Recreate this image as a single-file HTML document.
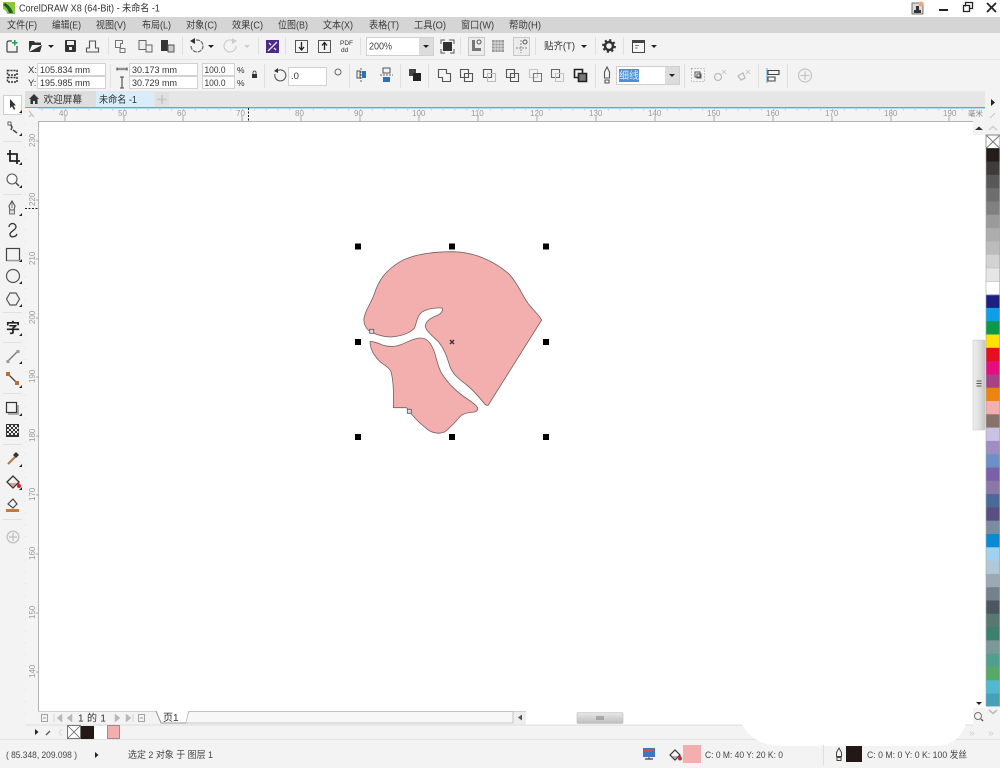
<!DOCTYPE html>
<html><head><meta charset="utf-8"><title>CorelDRAW X8</title>
<style>
html,body{margin:0;padding:0;background:#fff;overflow:hidden;width:1000px;height:768px}
svg{display:block;position:absolute;left:0;top:0}
text{font-family:"Liberation Sans","Noto Sans CJK SC",sans-serif;font-size:10px;fill:#333}
.m text{font-size:10px;fill:#3a3a3a}
.r text{font-size:8px;fill:#9a9a9a}
.p text{font-size:9.5px;fill:#333}
.ui{filter:blur(.35px)}
</style></head><body>
<svg width="1000" height="768" viewBox="0 0 1000 768" xmlns="http://www.w3.org/2000/svg">
<defs>
<pattern id="hx" x="6" y="0" width="11.8" height="14" patternUnits="userSpaceOnUse"><rect x="0" y="11" width="1" height="1.500" fill="#c4c4c4"/></pattern>
<pattern id="vx" x="0" y="5" width="14" height="11.8" patternUnits="userSpaceOnUse"><rect x="10" y="0" width="1.500" height="1" fill="#c4c4c4"/></pattern>
<linearGradient id="sb" x1="0" x2="1" y1="0" y2="0"><stop offset="0" stop-color="#efefef"/><stop offset=".6" stop-color="#dcdcdc"/><stop offset="1" stop-color="#c4c4c4"/></linearGradient>
<linearGradient id="sh" x1="0" x2="0" y1="0" y2="1"><stop offset="0" stop-color="#e8e8e8"/><stop offset="1" stop-color="#bdbdbd"/></linearGradient>
</defs>
<!-- backgrounds -->
<rect width="1000" height="768" fill="#fff"/>
<rect y="17" width="1000" height="16" fill="#d5d5d5"/>
<rect y="33" width="1000" height="26" fill="#f3f3f3"/>
<rect y="59" width="1000" height="1" fill="#e4e4e4"/>
<rect y="60" width="1000" height="31" fill="#f3f3f3"/>
<rect y="91" width="1000" height="16" fill="#e6e6e6"/>
<rect x="0" y="91" width="25" height="649" fill="#f3f3f3"/>
<rect x="25" y="108.400" width="960" height="13" fill="#f4f4f4"/>
<rect x="25" y="108.400" width="960" height="13" fill="url(#hx)"/>
<rect x="25" y="107" width="960" height="1.400" fill="#43b4e2"/>
<rect x="25" y="121" width="948" height="1" fill="#b4b4b4"/>
<rect x="25" y="108" width="13" height="617" fill="#f4f4f4"/>
<rect x="25" y="108" width="13" height="617" fill="url(#vx)"/>
<rect x="38" y="121" width="1" height="590" fill="#b4b4b4"/>
<rect x="985" y="91" width="15" height="44" fill="#f3f3f3"/>
<rect x="973" y="121" width="13" height="14" fill="#f3f3f3"/>
<rect x="986" y="706" width="14" height="34" fill="#f3f3f3"/>
<!-- lower bars -->
<rect x="38" y="711" width="488" height="14" fill="#f3f3f3"/>
<rect x="38" y="711" width="488" height="1" fill="#cfcfcf"/>
<rect x="973" y="708" width="13" height="17" fill="#f3f3f3"/>
<rect x="0" y="725" width="1000" height="15" fill="#f3f3f3"/>
<rect x="25" y="724.500" width="948" height="1" fill="#dcdcdc"/>
<rect x="0" y="740" width="1000" height="28" fill="#f3f3f3"/>
<rect x="0" y="739" width="1000" height="1" fill="#e2e2e2"/>
<path d="M742 724 Q752 745 782 746 L938 746 Q958 745 966 724Z" fill="#fff"/>

<!-- shape -->
<svg x="345" y="235" width="215" height="210" viewBox="0 0 645 630">
<g fill="#f3aeae" stroke="#75605f" stroke-width="2.4" stroke-linejoin="round">
<path d="M57 250C60 225 80 205 92 165C105 130 125 105 165 80C205 58 260 50 325 50C395 52 450 82 490 115C520 145 535 190 553 210C565 225 582 240 590 255L430 510Q425 513 420 508C405 490 385 465 365 450C340 430 325 420 315 395C305 365 300 345 280 320C265 305 245 290 241 275C240 258 262 246 280 240C290 234 295 225 292 219C270 217 245 222 230 232C215 245 215 265 208 280C190 298 160 305 135 306C115 305 95 300 75 290C62 280 55 265 57 250Z"/>
<path d="M75 320C85 318 100 325 112 330C130 336 150 336 170 328C190 320 205 310 225 309C245 308 258 325 266 345C275 370 278 395 290 415C305 440 330 465 350 480C370 495 390 505 398 518Q399 528 390 531C375 532 360 534 350 540C335 555 320 575 300 590C285 598 265 595 250 585C230 570 210 550 195 532C190 525 188 519 183 518L145 518C146 490 146 440 138 410C130 393 115 390 105 380C90 365 75 345 75 320Z"/>
</g></svg>
<!-- handles -->
<g fill="#000">
<rect x="355" y="243.500" width="6" height="6"/><rect x="449" y="243.500" width="6" height="6"/><rect x="543" y="243.500" width="6" height="6"/>
<rect x="355" y="339" width="6" height="6"/><rect x="543" y="339" width="6" height="6"/>
<rect x="355" y="434" width="6" height="6"/><rect x="449" y="434" width="6" height="6"/><rect x="543" y="434" width="6" height="6"/>
</g>
<rect x="369.700" y="329.300" width="4" height="4" fill="#ddd" stroke="#555" stroke-width=".8"/>
<rect x="407.300" y="409.300" width="4" height="4" fill="#ddd" stroke="#555" stroke-width=".8"/>
<path d="M450 340l4 4M454 340l-4 4" stroke="#334" stroke-width="1.400"/>

<g class="ui">
<!-- title -->
<rect x="3" y="2" width="12" height="12" fill="#8cc63f"/>
<path d="M5 3C9 5 12 9 13 13L9 13C8 9 6 7 3 5Z" fill="#1e5b2c"/>
<path d="M3 9C5 10 7 12 7 14L3 14Z" fill="#fff"/>
<text x="19" y="11.500" style="font-size:10px" textLength="141" lengthAdjust="spacingAndGlyphs">CorelDRAW X8 (64-Bit) - 未命名 -1</text>
<rect x="912" y="3" width="11" height="11" fill="#dcdcdc" stroke="#555" stroke-width=".8"/>
<path d="M914 13v-3h7v3zM916 6h3v4h-3z" fill="#333"/>
<circle cx="921" cy="4" r="2.500" fill="#f2a878"/>
<rect x="939" y="9" width="9" height="2" fill="#222"/>
<path d="M965.500 6.500V2.500h7v6h-3M963.500 5.500h6v6h-6z" fill="none" stroke="#222" stroke-width="1.300"/>
<path d="M987 3l9 9M996 3l-9 9" stroke="#222" stroke-width="1.800"/>

<!-- menu -->
<g class="m">
<text x="7" y="28.500" textLength="30" lengthAdjust="spacingAndGlyphs">文件(F)</text><text x="52" y="28.500" textLength="29" lengthAdjust="spacingAndGlyphs">编辑(E)</text><text x="96" y="28.500" textLength="30" lengthAdjust="spacingAndGlyphs">视图(V)</text><text x="142" y="28.500" textLength="29" lengthAdjust="spacingAndGlyphs">布局(L)</text><text x="186" y="28.500" textLength="31" lengthAdjust="spacingAndGlyphs">对象(C)</text><text x="232" y="28.500" textLength="31" lengthAdjust="spacingAndGlyphs">效果(C)</text><text x="278" y="28.500" textLength="30" lengthAdjust="spacingAndGlyphs">位图(B)</text><text x="323" y="28.500" textLength="30" lengthAdjust="spacingAndGlyphs">文本(X)</text><text x="369" y="28.500" textLength="30" lengthAdjust="spacingAndGlyphs">表格(T)</text><text x="414" y="28.500" textLength="32" lengthAdjust="spacingAndGlyphs">工具(O)</text><text x="461" y="28.500" textLength="33" lengthAdjust="spacingAndGlyphs">窗口(W)</text><text x="509" y="28.500" textLength="32" lengthAdjust="spacingAndGlyphs">帮助(H)</text>
</g>

<!-- separators toolbar 1 -->
<g fill="#dfdfdf">
<rect x="108" y="37" width="1" height="18"/><rect x="182" y="37" width="1" height="18"/><rect x="258" y="37" width="1" height="18"/><rect x="285" y="37" width="1" height="18"/><rect x="360" y="37" width="1" height="18"/><rect x="460" y="37" width="1" height="18"/><rect x="535" y="37" width="1" height="18"/><rect x="595" y="37" width="1" height="18"/><rect x="623" y="37" width="1" height="18"/>
<rect x="110" y="64" width="1" height="24"/><rect x="264" y="64" width="1" height="24"/><rect x="349" y="64" width="1" height="24"/><rect x="400" y="64" width="1" height="24"/><rect x="428" y="64" width="1" height="24"/><rect x="595" y="64" width="1" height="24"/><rect x="684" y="64" width="1" height="24"/><rect x="758" y="64" width="1" height="24"/><rect x="787" y="64" width="1" height="24"/>
</g>

<!-- toolbar 1 icons -->
<path d="M7 52V43Q7 41 9 41H12M7 52H17V46" fill="none" stroke="#444" stroke-width="1.200"/>
<path d="M14 40h1.500v2h2v1.500h-2v2h-1.500v-2h-2v-1.500h2z" fill="#16a34a"/>
<path d="M29 52V41h5l1 1.500h6V45H32l-3 7zM29 52h11l2-7" fill="#333"/>
<path d="M48 45h6l-3 3z" fill="#222"/>
<rect x="65" y="40" width="11" height="12" rx="1" fill="#333"/><rect x="67" y="41" width="7" height="4" fill="#eee"/><rect x="69" y="47" width="3" height="3" fill="#eee"/>
<path d="M86.500 52v-4h3v-7h6v7h3v4z" fill="none" stroke="#555" stroke-width="1.100"/>
<path d="M115.500 40.500h7v3h-2v4h-5zM120 48.500h5v4h-5z" fill="none" stroke="#777" stroke-width="1"/>
<path d="M139 40.500h7v9h-7zM146 45h6v7h-6z" fill="#eee" stroke="#666" stroke-width="1"/>
<rect x="161" y="40" width="7" height="11" fill="#333"/><rect x="168" y="45" width="6" height="7" fill="#ccc" stroke="#555" stroke-width="1"/>
<path d="M191 46a6 6 0 1 0 2-4.500" fill="none" stroke="#666" stroke-width="1.200" stroke-dasharray="4 1"/><path d="M195 38v6l-5-3z" fill="#333"/>
<path d="M208 45h6l-3 3z" fill="#222"/>
<path d="M236 46a6 6 0 1 1-2-4.500" fill="none" stroke="#ccc" stroke-width="1.200"/><path d="M232 38v6l5-3z" fill="#ccc"/>
<path d="M244 45h6l-3 3z" fill="#ccc"/>
<rect x="266" y="40" width="13" height="13" fill="#4b2a86"/><path d="M268 51l9-9M269 43l2 2M274 48l2 2" stroke="#e8e0f4" stroke-width="1.400"/>
<rect x="295.500" y="40.500" width="12" height="12" fill="none" stroke="#555"/><path d="M301.500 42v7M299 47l2.500 3 2.500-3" fill="none" stroke="#222" stroke-width="1.300"/>
<rect x="318.500" y="40.500" width="12" height="12" fill="none" stroke="#555"/><path d="M324.500 50v-7M322 45.500l2.500-3 2.500 3" fill="none" stroke="#222" stroke-width="1.300"/>
<text x="340" y="45" style="font-size:6.500px;fill:#333">PDF</text><text x="341" y="52" style="font-size:6.500px;fill:#333">dd</text>
<rect x="366.500" y="37.500" width="67" height="18" fill="#fff" stroke="#d0d0d0"/>
<rect x="419" y="38" width="14" height="17" fill="#dcdcdc"/>
<path d="M423 45h6l-3 3z" fill="#222"/>
<text x="369" y="49.500" style="font-size:10px;fill:#444" textLength="23" lengthAdjust="spacingAndGlyphs">200%</text>
<rect x="443" y="42" width="9" height="9" fill="#333"/><path d="M441 44v-4h4M449 40h5v4M454 49v4h-4M445 53h-4v-4" fill="none" stroke="#555"/>
<rect x="468.500" y="37.500" width="16" height="18" fill="#ececec" stroke="#c8c8c8"/><path d="M472 40v11h9v-3h-6v-8z" fill="#777"/><circle cx="479" cy="42" r="2" fill="none" stroke="#555"/>
<path d="M492 40h12v12h-12z" fill="#999"/><path d="M492 43h12M492 46h12M492 49h12M495 40v12M498 40v12M501 40v12" stroke="#eee" stroke-width=".7"/>
<rect x="513.500" y="37.500" width="16" height="18" fill="#ececec" stroke="#c8c8c8"/><path d="M521 40v13M516 48h11" stroke="#888" stroke-dasharray="2 1"/><circle cx="525" cy="42" r="2" fill="none" stroke="#555"/>
<text x="544" y="49.500" textLength="31" lengthAdjust="spacingAndGlyphs">贴齐(T)</text>
<path d="M581 45h6l-3 3z" fill="#222"/>
<g fill="none" stroke="#333"><circle cx="609" cy="46" r="4" stroke-width="2.500"/><circle cx="609" cy="46" r="6" stroke-width="1.800" stroke-dasharray="2.200 2.500"/></g>
<rect x="632.500" y="40.500" width="12" height="12" fill="#f7f7f7" stroke="#444"/><rect x="632.500" y="40.500" width="12" height="2.500" fill="#444"/><path d="M635 45h4v1h-4zM635 47.500h2.500v1H635z" fill="#777"/>
<path d="M651 45h6l-3 3z" fill="#222"/>

<!-- property bar -->
<g fill="none" stroke="#333" stroke-width="1.500" stroke-dasharray="2 1"><rect x="7.500" y="70.500" width="9.500" height="4.500"/><rect x="7.500" y="77.500" width="9.500" height="4.500"/></g>
<g fill="#fff" stroke="#d2d2d2">
<rect x="37.500" y="63.500" width="68" height="12"/><rect x="37.500" y="76.500" width="68" height="12"/>
<rect x="129.500" y="63.500" width="68" height="12"/><rect x="129.500" y="76.500" width="68" height="12"/>
<rect x="202.500" y="63.500" width="32" height="12"/><rect x="202.500" y="76.500" width="32" height="12"/>
<rect x="288.500" y="67.500" width="38" height="18"/>
</g>
<g class="p">
<text x="28" y="73">X:</text><text x="28" y="86">Y:</text>
<text x="40" y="73" textLength="50" lengthAdjust="spacingAndGlyphs">105.834 mm</text><text x="40" y="86" textLength="50" lengthAdjust="spacingAndGlyphs">195.985 mm</text>
<text x="132" y="73" textLength="45" lengthAdjust="spacingAndGlyphs">30.173 mm</text><text x="132" y="86" textLength="45" lengthAdjust="spacingAndGlyphs">30.729 mm</text>
<text x="204.500" y="73" textLength="21" lengthAdjust="spacingAndGlyphs">100.0</text><text x="204.500" y="86" textLength="21" lengthAdjust="spacingAndGlyphs">100.0</text>
<text x="237" y="73" style="font-size:8.500px">%</text><text x="237" y="86" style="font-size:8.500px">%</text>
<text x="291" y="79">.0</text>
</g>
<path d="M117 69h10M117 67.500v3M127 67.500v3" stroke="#444" stroke-width="1.100"/><path d="M119 67.500v3M121 67.500v3M123 67.500v3M125 67.500v3" stroke="#777" stroke-width=".6"/>
<path d="M122 77v11M120 77h4M120 88h4" stroke="#444" stroke-width="1.100"/>
<rect x="252" y="74" width="5" height="4" fill="#333"/><path d="M253 74v-1.500a1.500 1.500 0 0 1 3 0V74" fill="none" stroke="#333" stroke-width=".8"/>
<path d="M275 74a5.500 5.500 0 1 0 2-3" fill="none" stroke="#555" stroke-width="1.100"/><path d="M278 68v5l-4-2z" fill="#333"/>
<circle cx="338" cy="72" r="3" fill="none" stroke="#666"/>
<path d="M361 68v15" stroke="#666" stroke-dasharray="2 1"/><path d="M357 71h3v7h-3z" fill="none" stroke="#555"/><path d="M362 71h4v7h-4z" fill="#2a72b5"/>
<path d="M380 75h13" stroke="#666" stroke-dasharray="2 1"/><path d="M383 68h7v5h-7z" fill="none" stroke="#555"/><path d="M383 77h7v5h-7z" fill="#2a72b5"/>
<rect x="409" y="69" width="7" height="7" fill="#444"/><rect x="413" y="73" width="8" height="8" fill="#222"/>
<!-- boolean icons -->
<g fill="none" stroke="#555" stroke-width="1.100">
<path d="M438.500 69.500h8v4h4v8h-8v-4h-4z"/>
<path d="M460.500 69.500h8v8h-8zM464.500 73.500h8v8h-8z"/>
</g>
<g fill="none"><path d="M483.500 69.500h8v8h-8z" stroke="#555" stroke-width="1.100"/><path d="M487.500 73.500h8v8h-8z" stroke="#bbb" stroke-width="1.100"/>
<path d="M506.500 69.500h8v8h-8zM510.500 73.500h8v8h-8z" stroke="#555" stroke-width="1.100"/>
<path d="M529.500 69.500h8v8h-8z" stroke="#c4c4c4" stroke-width="1.100"/><path d="M533.500 73.500h8v8h-8z" stroke="#777" stroke-width="1.100"/>
<path d="M551.500 69.500h8v8h-8z" stroke="#666" stroke-width="1.100"/><path d="M555.500 73.500h8v8h-8z" stroke="#c4c4c4" stroke-width="1.100"/>
<path d="M574.500 69.500h8v8h-8z" stroke="#222" stroke-width="1.600"/><path d="M578.500 73.500h8v8h-8z" stroke="#222" stroke-width="1.600" fill="#777"/></g>
<path d="M607 67l2.500 5v6h-5v-6zM605 80h4v3h-4z" fill="none" stroke="#555" stroke-width="1.100"/>
<rect x="616.500" y="66.500" width="63" height="18" fill="#fff" stroke="#cfcfcf"/>
<rect x="665" y="67" width="14" height="17" fill="#dcdcdc"/>
<path d="M669 74h6l-3 3z" fill="#222"/>
<rect x="619" y="69" width="20" height="13" fill="#4a90d9"/>
<text x="619" y="79" style="font-size:10px;fill:#dcecff">细线</text>
<g fill="none" stroke="#999" stroke-dasharray="1 2"><rect x="691.500" y="68.500" width="13" height="13"/></g><path d="M695 72h5v5h-5zM697 74h4v4h-4z" fill="none" stroke="#555"/>
<circle cx="718" cy="77" r="3.500" fill="none" stroke="#bbb" stroke-width="1.300"/><path d="M722 70l4 4M726 70l-4 4" stroke="#ccc"/>
<path d="M738 76l5-3 2 5-4 2z" fill="none" stroke="#bbb" stroke-width="1.300"/><path d="M746 70l4 4M750 70l-4 4" stroke="#ccc"/>
<path d="M767 68v15" stroke="#56a8d8"/><path d="M768 70.500h11v4h-11zM768 77h7v4h-7z" fill="none" stroke="#444" stroke-width="1.100"/>
<circle cx="805" cy="75.500" r="6.500" fill="none" stroke="#c6c6c6" stroke-width="1.200"/><path d="M805 71v9M800.500 75.500h9" stroke="#c6c6c6" stroke-width="1.200"/>

<!-- tabs -->
<rect x="25" y="91" width="71" height="16" fill="#dedede"/>
<path d="M29 99l5-5 5 5h-1.500v5h-2.500v-3h-2v3h-2.500v-5z" fill="#333"/>
<text x="43.500" y="103" textLength="38.500" lengthAdjust="spacingAndGlyphs">欢迎屏幕</text>
<rect x="96" y="92" width="58" height="15" fill="#d8ecfa"/>
<text x="99" y="103" textLength="38" lengthAdjust="spacingAndGlyphs">未命名 -1</text>
<rect x="155" y="92" width="14" height="15" fill="#e0e0e0"/>
<path d="M162 95v9M157.500 99.500h9" stroke="#c4c4c4" stroke-width="1.500"/>

<!-- horizontal ruler labels -->
<g class="r">
<text x="59" y="116">40</text><text x="118" y="116">50</text><text x="177" y="116">60</text><text x="236" y="116">70</text><text x="295" y="116">80</text><text x="354" y="116">90</text><text x="412" y="116">100</text><text x="471" y="116">110</text><text x="530" y="116">120</text><text x="589" y="116">130</text><text x="648" y="116">140</text><text x="707" y="116">150</text><text x="766" y="116">160</text><text x="825" y="116">170</text><text x="884" y="116">180</text><text x="943" y="116">190</text><text x="968" y="116" style="font-size:7.500px;fill:#888">毫米</text>
<g transform="rotate(-90)"><text x="-147" y="35">230</text><text x="-206" y="35">220</text><text x="-265" y="35">210</text><text x="-324" y="35">200</text><text x="-383" y="35">190</text><text x="-442" y="35">180</text><text x="-501" y="35">170</text><text x="-560" y="35">160</text><text x="-619" y="35">150</text><text x="-678" y="35">140</text></g>
</g>
<g stroke="#aaa"><path d="M65 116v5M124 116v5M183 116v5M242 116v5M301 116v5M360 116v5M419 116v5M478 116v5M537 116v5M596 116v5M655 116v5M714 116v5M773 116v5M832 116v5M891 116v5M949 116v5"/><path d="M36 141h3M36 200h3M36 259h3M36 318h3M36 377h3M36 436h3M36 495h3M36 554h3M36 613h3M36 672h3"/></g>
<path d="M248.500 108v13" stroke="#222" stroke-dasharray="2 1.500"/>
<path d="M25 208.500h13" stroke="#222" stroke-dasharray="2 1.500"/>
<path d="M29 111l5 6M29 117l3-3" stroke="#bbb"/>

<!-- left toolbox -->
<g fill="#e1e1e1"><rect x="3" y="141" width="19" height="1"/><rect x="3" y="194" width="19" height="1"/><rect x="3" y="312" width="19" height="1"/><rect x="3" y="342" width="19" height="1"/><rect x="3" y="393" width="19" height="1"/><rect x="3" y="444" width="19" height="1"/><rect x="3" y="519" width="19" height="1"/></g>
<rect x="3.500" y="95.500" width="18" height="19" fill="#fff" stroke="#cfcfcf"/>
<path d="M10 99l6 6.500h-2.500l1.800 3.500-1.500.8-1.800-3.500-2 2z" fill="#333"/>
<path d="M19 113h3v-3zM19 136h3v-3zM19 165h3v-3zM19 188h3v-3zM19 216h3v-3zM19 262h3v-3zM19 284h3v-3zM19 307h3v-3zM19 336h3v-3zM19 364h3v-3zM19 388h3v-3zM19 416h3v-3zM19 467h3v-3zM19 490h3v-3z" fill="#222"/>
<path d="M10 123l2 4-1 3M13 130l4 3" fill="none" stroke="#444" stroke-width="1.500"/><rect x="8" y="122" width="3" height="3" fill="#fff" stroke="#444" stroke-width=".8"/>
<path d="M10 150v11h10M7 154h10v10" fill="none" stroke="#222" stroke-width="1.800"/>
<circle cx="12" cy="179" r="5" fill="#f8f8f8" stroke="#555" stroke-width="1.100"/><path d="M16 183l3 3" stroke="#444" stroke-width="1.500"/>
<path d="M12 201l3 5-1 4h-4l-1-4z" fill="none" stroke="#555" stroke-width="1.100"/><rect x="9.500" y="210" width="5" height="4" fill="#ddd" stroke="#555" stroke-width=".8"/><path d="M12 201v7" stroke="#555" stroke-width=".8"/>
<path d="M9 227a3.500 3.500 0 0 1 7 0c0 3-7 5-6 8 1 3 6 2 7-1" fill="none" stroke="#333" stroke-width="1.300"/>
<rect x="6.500" y="248.500" width="13" height="12" fill="none" stroke="#444" stroke-width="1.200"/><rect x="7" y="260" width="13" height="1.200" fill="#999"/>
<circle cx="13" cy="276" r="6.500" fill="none" stroke="#555" stroke-width="1.200"/>
<path d="M10 293h6l3.500 6-3.500 6h-6l-3.500-6z" fill="none" stroke="#555" stroke-width="1.200"/>
<text x="6" y="333" style="font-size:14px;fill:#222;font-weight:bold">字</text>
<path d="M8 361l10-10" stroke="#777" stroke-width="1.300"/><rect x="6.500" y="360" width="3" height="3" fill="#999"/><rect x="16.500" y="350" width="3" height="3" fill="#999"/>
<path d="M9 375l8 8" stroke="#444" stroke-width="1.300"/><rect x="6" y="372" width="4" height="4" fill="#b57038"/><rect x="15" y="381" width="4" height="4" fill="#b57038"/>
<rect x="6.500" y="402.500" width="10" height="10" fill="#f3f3f3" stroke="#333" stroke-width="1.200"/><path d="M18 405v9h-10" fill="none" stroke="#999" stroke-width="1.600"/>
<rect x="6" y="424" width="13" height="13" fill="#333"/><path d="M7 425h2v2H7zM11 425h2v2h-2zM15 425h2v2h-2zM9 427h2v2H9zM13 427h2v2h-2zM17 427h1.500v2H17zM7 429h2v2H7zM11 429h2v2h-2zM15 429h2v2h-2zM9 431h2v2H9zM13 431h2v2h-2zM17 431h1.500v2H17zM7 433h2v2H7zM11 433h2v2h-2zM15 433h2v2h-2z" fill="#eee"/>
<path d="M8 464l7-7" stroke="#b87a50" stroke-width="2.200"/><path d="M13 455l3-3 3 3-3 3z" fill="#333"/>
<path d="M7 482l6-6 6 6-6 6z" fill="#f3f3f3" stroke="#333" stroke-width="1.300"/><path d="M9 483h8l-4 4z" fill="#d9a0a0"/><path d="M18 482c2 2 3 3 3 4a2 2 0 0 1-4 0z" fill="#d6202a"/>
<path d="M8 504l5-5 4 5-4 4z" fill="#f3f3f3" stroke="#444" stroke-width="1.200"/><rect x="6" y="509" width="13" height="3" fill="#c57a3c"/>
<circle cx="13" cy="537" r="5.800" fill="none" stroke="#c4c4c4" stroke-width="1.400"/><path d="M13 533v8M9 537h8" stroke="#c4c4c4" stroke-width="1.400"/>

<!-- vertical scrollbar -->
<rect x="973" y="340" width="12" height="90" rx="1" fill="url(#sb)" stroke="#c8c8c8" stroke-width=".6"/>
<path d="M976.500 381h5M976.500 383.500h5M976.500 386h5" stroke="#555" stroke-width=".9"/>
<path d="M975 130l4-3.500 4 3.500z" fill="#333"/>
<path d="M976 702h6l-3 3z" fill="#222"/>
<circle cx="978" cy="716" r="3.500" fill="#f3f3f3" stroke="#777"/><path d="M981 719l2 2" stroke="#555" stroke-width="1.300"/>
<path d="M991 99v7l4-3.500z" fill="#222"/>
<path d="M990 118l5-5" stroke="#ccc" stroke-width="1.200"/>
<path d="M989 130l4-3.500 4 3.500" fill="none" stroke="#d0d0d0" stroke-width="1.500"/>
<path d="M989 710l4 3.500 4-3.500" fill="none" stroke="#bbb" stroke-width="1.500"/>
<text x="988" y="736" style="font-size:10px;fill:#ccc">»</text>
<text x="969" y="736" style="font-size:10px;fill:#ccc">»</text>

<!-- horizontal bottom bar -->
<g fill="none" stroke="#999" stroke-width=".9"><rect x="41.500" y="714.500" width="6" height="7"/><rect x="138.500" y="714.500" width="6" height="7"/></g>
<path d="M43 718h3M140 718h3" stroke="#999"/>
<path d="M54 714v8M62 714l-5 4 5 4zM72 714l-5 4 5 4zM115 714l5 4-5 4zM126 714l5 4-5 4zM133 714v8" fill="#b8b8b8" stroke="#b8b8b8" stroke-width=".5"/>
<text x="78" y="721.500" style="font-size:10px;fill:#333;letter-spacing:.3px">1 的 1</text>
<path d="M156 711l5 12h25l3-12" fill="#fff" stroke="#999"/>
<path d="M189 711.500h324V723H186" fill="#f7f7f7" stroke="#b9b9b9" stroke-width=".8"/>
<text x="163" y="721" style="font-size:10px;fill:#333">页1</text>
<rect x="514" y="712" width="12" height="12" fill="#eee"/>
<path d="M522 714.500v6l-4-3z" fill="#555"/>
<rect x="577" y="712.500" width="46" height="11" rx="1" fill="url(#sh)" stroke="#bcbcbc" stroke-width=".6"/>
<path d="M597 716v4M599 716v4M601 716v4M603 716v4" stroke="#666" stroke-width=".8"/>

<!-- doc palette -->
<path d="M35 729v6l3.500-3z" fill="#222"/>
<path d="M46 735l4-4" stroke="#555" stroke-width="1.300"/>
<path d="M62 729l-3 3.500 3 3.500" fill="none" stroke="#ddd" stroke-width="1.200"/>
<rect x="67.500" y="725.500" width="13" height="13" fill="#fff" stroke="#777"/><path d="M68 726l12 12M80 726l-12 12" stroke="#666" stroke-width=".8"/>
<rect x="81" y="726" width="13" height="13" fill="#231815"/>
<rect x="94.500" y="726" width="13" height="13" fill="#fff"/>
<rect x="107.500" y="725.500" width="12" height="13" fill="#f3aeae" stroke="#8a7a7a" stroke-width=".8"/>

<!-- status bar -->
<text x="6" y="758" style="font-size:9.500px;fill:#444" textLength="71" lengthAdjust="spacingAndGlyphs">( 85.348, 209.098 )</text>
<path d="M95 752v6l3.500-3z" fill="#222"/>
<text x="128" y="758" style="font-size:9.500px;fill:#444" textLength="85" lengthAdjust="spacingAndGlyphs">选定 2 对象 于 图层 1</text>
<rect x="643" y="748" width="12" height="9" fill="#3b78c2"/><rect x="644" y="749" width="10" height="3" fill="#d84a4a"/><path d="M645 759h8" stroke="#444" stroke-width="1.300"/><path d="M649 757v2" stroke="#444"/>
<path d="M670 755l5-5 5 5-5 5z" fill="#f8f8f8" stroke="#333" stroke-width="1.200"/><path d="M672 756h6l-3 3z" fill="#d9a0a0"/><path d="M680 755c1.500 2 2 3 2 3.500a2 2 0 0 1-4 0z" fill="#d6202a"/>
<rect x="683" y="745" width="18" height="18" fill="#f3aeae"/>
<text x="705" y="758" style="font-size:9.500px;fill:#444" textLength="78" lengthAdjust="spacingAndGlyphs">C: 0 M: 40 Y: 20 K: 0</text>
<rect x="823" y="745" width="1" height="20" fill="#dedede"/>
<path d="M839 748l2.500 4.500v4h-5v-4zM837 757.500h4v3h-4z" fill="none" stroke="#444" stroke-width="1"/>
<rect x="846" y="746" width="16" height="16" fill="#231815"/>
<text x="867" y="758" style="font-size:9.500px;fill:#444" textLength="100" lengthAdjust="spacingAndGlyphs">C: 0 M: 0 Y: 0 K: 100 发丝</text>
</g>

<!-- palette -->
<rect x="986" y="135" width="14" height="13.500" fill="#fff" stroke="#666" stroke-width=".8"/>
<path d="M986.500 135.500l13 12.500M999.500 135.500l-13 12.500" stroke="#777"/>
<g>
<rect x="986" y="148.300" width="14" height="13.800" fill="#231c18"/>
<rect x="986" y="161.600" width="14" height="13.800" fill="#403b3b"/>
<rect x="986" y="174.900" width="14" height="13.800" fill="#585858"/>
<rect x="986" y="188.200" width="14" height="13.800" fill="#6e6e6e"/>
<rect x="986" y="201.500" width="14" height="13.800" fill="#808080"/>
<rect x="986" y="214.800" width="14" height="13.800" fill="#9b9b9b"/>
<rect x="986" y="228.100" width="14" height="13.800" fill="#adadad"/>
<rect x="986" y="241.400" width="14" height="13.800" fill="#bcbcbc"/>
<rect x="986" y="254.700" width="14" height="13.800" fill="#d3d3d3"/>
<rect x="986" y="268" width="14" height="13.800" fill="#e6e6e6"/>
<rect x="986" y="281.300" width="14" height="13.800" fill="#fff"/>
<rect x="986" y="294.600" width="14" height="13.800" fill="#1c2181"/>
<rect x="986" y="307.900" width="14" height="13.800" fill="#0ea0e6"/>
<rect x="986" y="321.200" width="14" height="13.800" fill="#0c9a48"/>
<rect x="986" y="334.500" width="14" height="13.800" fill="#fde100"/>
<rect x="986" y="347.800" width="14" height="13.800" fill="#e60f20"/>
<rect x="986" y="361.100" width="14" height="13.800" fill="#e60d80"/>
<rect x="986" y="374.400" width="14" height="13.800" fill="#a84188"/>
<rect x="986" y="387.700" width="14" height="13.800" fill="#ee8410"/>
<rect x="986" y="401" width="14" height="13.800" fill="#f3aeae"/>
<rect x="986" y="414.300" width="14" height="13.800" fill="#87736a"/>
<rect x="986" y="427.600" width="14" height="13.800" fill="#c9c2e2"/>
<rect x="986" y="440.900" width="14" height="13.800" fill="#a08dc2"/>
<rect x="986" y="454.200" width="14" height="13.800" fill="#6b90c8"/>
<rect x="986" y="467.500" width="14" height="13.800" fill="#7a60a8"/>
<rect x="986" y="480.800" width="14" height="13.800" fill="#8c78a8"/>
<rect x="986" y="494.100" width="14" height="13.800" fill="#4a6a9a"/>
<rect x="986" y="507.400" width="14" height="13.800" fill="#5a5080"/>
<rect x="986" y="520.700" width="14" height="13.800" fill="#7a8ba2"/>
<rect x="986" y="534" width="14" height="13.800" fill="#0a8ad2"/>
<rect x="986" y="547.300" width="14" height="13.800" fill="#a0d2f0"/>
<rect x="986" y="560.600" width="14" height="13.800" fill="#b0c8d8"/>
<rect x="986" y="573.900" width="14" height="13.800" fill="#9ca8b4"/>
<rect x="986" y="587.200" width="14" height="13.800" fill="#74808c"/>
<rect x="986" y="600.500" width="14" height="13.800" fill="#4c5660"/>
<rect x="986" y="613.800" width="14" height="13.800" fill="#587870"/>
<rect x="986" y="627.100" width="14" height="13.800" fill="#3e8070"/>
<rect x="986" y="640.400" width="14" height="13.800" fill="#7c9898"/>
<rect x="986" y="653.700" width="14" height="13.800" fill="#50a090"/>
<rect x="986" y="667" width="14" height="13.800" fill="#58a868"/>
<rect x="986" y="680.300" width="14" height="13.800" fill="#50b8d0"/>
<rect x="986" y="693.600" width="14" height="12.800" fill="#45a0b8"/>
</g>
<path d="M986 135v571M999.700 135v571" stroke="#a8a8a8" stroke-width=".6"/>
<path d="M986 268h14M986 281.300h14M986 295h14" stroke="#b0b0b0" stroke-width=".6"/>
</svg>
</body></html>
